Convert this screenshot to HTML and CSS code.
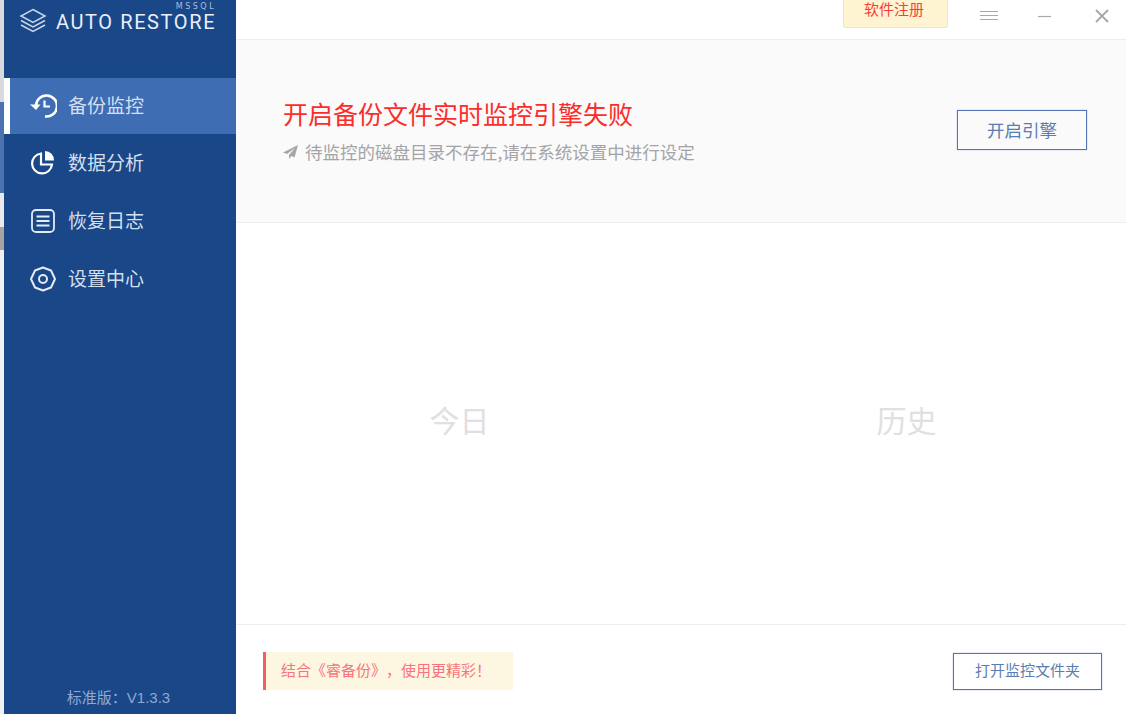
FILE: index.html
```html
<!DOCTYPE html>
<html lang="zh-CN">
<head>
    <meta charset="UTF-8">
    <title>Auto Restore</title>
    <link rel="stylesheet" href="styles.css">
</head>
<body>
    <div class="desktop-edge">
        <div class="edge-a"></div>
        <div class="edge-b"></div>
        <div class="edge-c"></div>
        <div class="edge-d"></div>
    </div>
    <aside class="sidebar">
        <div class="brand">
            <svg class="brand-icon" width="28" height="26" viewBox="0 0 28 26" fill="none" stroke="#c9d6ea" stroke-width="1.5">
                <path d="M14 1.5 L26 8 L14 14.5 L2 8 Z"/>
                <path d="M2 12.5 L14 19 L26 12.5"/>
                <path d="M2 17 L14 23.5 L26 17"/>
            </svg>
            <div class="brand-text">
                <span class="brand-sub">MSSQL</span>
                <span class="brand-name">AUTO RESTORE</span>
            </div>
        </div>
        <nav class="nav">
            <a class="nav-item active">
                <svg width="28" height="26" viewBox="0 0 28 26" fill="none" stroke="#fff" stroke-width="2.6">
                    <path d="M7 13 A10.5 10.5 0 1 1 16 23.4"/>
                    <path d="M1 11.5 L11.5 11.5 L7 17 Z" fill="#fff" stroke="none"/>
                    <path d="M15.5 7.5 V13.5 H21" stroke-width="2.2"/>
                </svg>
                <span>备份监控</span>
            </a>
            <a class="nav-item">
                <svg width="28" height="26" viewBox="0 0 28 26" fill="none" stroke="#fff" stroke-width="2.2">
                    <path d="M12 3.5 A10 10 0 1 0 23 14.5 H12 Z"/>
                    <path d="M16 1 A9 9 0 0 1 25 10.5 H16 Z" fill="#fff" stroke="none"/>
                </svg>
                <span>数据分析</span>
            </a>
            <a class="nav-item">
                <svg width="28" height="26" viewBox="0 0 28 26" fill="none" stroke="#e4ebf5" stroke-width="1.8">
                    <rect x="3" y="2" width="22" height="22" rx="4"/>
                    <path d="M7.5 8.5 H20.5 M7.5 13 H20.5 M7.5 17.5 H20.5"/>
                </svg>
                <span>恢复日志</span>
            </a>
            <a class="nav-item">
                <svg width="28" height="26" viewBox="0 0 28 26" fill="none" stroke="#e4ebf5" stroke-width="2">
                    <path d="M14 1.5 L22 4.5 L26 13 L22 21.5 L14 24.5 L6 21.5 L2 13 L6 4.5 Z" stroke-linejoin="round"/>
                    <circle cx="14" cy="13" r="4"/>
                </svg>
                <span>设置中心</span>
            </a>
        </nav>
        <div class="version">标准版：V1.3.3</div>
    </aside>
    <main class="content">
        <header class="topbar">
            <a class="register">软件注册</a>
            <div class="win-btn win-menu">
                <svg width="18" height="12" viewBox="0 0 18 12" stroke="#a9a9a9" stroke-width="1"><path d="M0 1.5 H18 M0 5.5 H18 M0 9.5 H18"/></svg>
            </div>
            <div class="win-btn win-min">
                <svg width="13" height="3" viewBox="0 0 13 3" stroke="#a9a9a9" stroke-width="1.2"><path d="M0 1.5 H13"/></svg>
            </div>
            <div class="win-btn">
                <svg width="14" height="14" viewBox="0 0 14 14" stroke="#a9a5ab" stroke-width="1.8"><path d="M1 1 L13 13 M13 1 L1 13"/></svg>
            </div>
        </header>
        <section class="status">
            <div class="status-text">
                <h1>开启备份文件实时监控引擎失败</h1>
                <p>
                    <svg width="15" height="14" viewBox="0 0 15 14" fill="#a6a6a6"><path d="M15 0 L0 7.5 L4 9 L12 3 L6 10 L6 14 L8.5 11 L11.5 12.5 Z"/></svg>
                    待监控的磁盘目录不存在,请在系统设置中进行设定
                </p>
            </div>
            <a class="btn btn-engine">开启引擎</a>
        </section>
        <section class="panels">
            <div class="panel">今日</div>
            <div class="panel">历史</div>
        </section>
        <footer class="footer">
            <div class="tip">结合《睿备份》，使用更精彩！</div>
            <a class="btn btn-folder">打开监控文件夹</a>
        </footer>
    </main>
</body>
</html>
```

FILE: styles.css
```css
* {
    box-sizing: border-box;
}

body {
    margin: 0;
    display: flex;
    height: 714px;
    overflow: hidden;
    background: #fff;
    font-family: "Noto Sans CJK SC", "Liberation Sans", sans-serif;
    text-spacing-trim: space-all;
}

/* sliver of the desktop showing behind the window */
.desktop-edge {
    width: 4px;
    flex-shrink: 0;
    display: flex;
    flex-direction: column;
    background: #f0f0f0;
}

.edge-a {
    height: 102px;
    background: #d9d9dd;
}

.edge-b {
    height: 91px;
    background: #4a72b0;
}

.edge-c {
    height: 34px;
    background: #e9e9ec;
}

.edge-d {
    height: 23px;
    background: #a9a4a2;
}

.sidebar {
    width: 232px;
    flex-shrink: 0;
    display: flex;
    flex-direction: column;
    background: #194788;
    color: #e4ebf5;
}

.brand {
    height: 78px;
    display: flex;
    align-items: flex-start;
    gap: 9px;
    padding: 8px 0 0 15px;
}

.brand-icon {
    flex-shrink: 0;
}

.brand-text {
    display: flex;
    flex-direction: column;
    align-items: flex-end;
    margin-top: -6px;
}

.brand-sub {
    font-family: "DejaVu Sans", sans-serif;
    font-size: 8px;
    line-height: 9px;
    letter-spacing: 2.5px;
    color: #a9bedd;
}

.brand-name {
    margin-top: 1px;
    font-family: "Roboto", sans-serif;
    font-size: 20px;
    line-height: 20px;
    letter-spacing: 1.6px;
    color: #e9eff8;
}

.nav {
    display: flex;
    flex-direction: column;
}

.nav-item {
    height: 58px;
    display: flex;
    align-items: center;
    gap: 11px;
    padding-left: 25px;
    font-size: 19px;
    color: #d5dfee;
}

.nav-item span {
    margin-top: -4px;
}

.nav-item.active {
    height: 56px;
    background: #3f6db3;
    border-left: 6px solid #fff;
    padding-left: 19px;
}

.version {
    margin-top: auto;
    padding: 0 3px 6px 0;
    text-align: center;
    font-family: "Liberation Sans", "Noto Sans CJK SC", sans-serif;
    font-size: 15px;
    line-height: 20px;
    color: #8fa9d2;
}

.content {
    flex: 1;
    display: flex;
    flex-direction: column;
    min-width: 0;
}

.topbar {
    height: 40px;
    flex-shrink: 0;
    display: flex;
    align-items: flex-start;
    justify-content: flex-end;
    padding-right: 14px;
    border-bottom: 1px solid #eeeeee;
}

.register {
    width: 105px;
    height: 28px;
    margin-right: 31px;
    padding-right: 3px;
    background: #fff4d1;
    border: 1px solid #e8e4d8;
    border-top: 0;
    border-radius: 0 0 3px 3px;
    color: #f5403a;
    font-size: 15px;
    line-height: 18px;
    text-align: center;
}

.win-btn {
    width: 20px;
    height: 32px;
    display: flex;
    align-items: center;
    justify-content: center;
}

.win-menu {
    margin-right: 35px;
}

.win-min {
    margin-right: 38px;
}

.status {
    height: 183px;
    flex-shrink: 0;
    display: flex;
    align-items: center;
    justify-content: space-between;
    padding: 0 39px 3px 47px;
    background: #fafafa;
    border-bottom: 1px solid #eeeeee;
}

.status h1 {
    margin: 0 0 11px;
    font-size: 25px;
    line-height: 34px;
    font-weight: 400;
    color: #fb2d2a;
}

.status p {
    margin: 0;
    display: flex;
    align-items: center;
    gap: 7px;
    font-size: 17.5px;
    line-height: 22px;
    color: #a4a4a8;
}

.btn {
    display: flex;
    align-items: center;
    justify-content: center;
    border: 1px solid #5077b0;
    box-shadow: 0 0 1px #7ea0d0;
    color: #5b7cb0;
}

.btn-engine {
    width: 130px;
    height: 40px;
    font-size: 17.5px;
}

.btn-folder {
    width: 149px;
    height: 37px;
    padding-bottom: 3px;
    font-size: 15px;
}

.panels {
    flex: 1;
    display: grid;
    grid-template-columns: 447px 447px;
    overflow: hidden;
}

.panel {
    display: flex;
    align-items: center;
    justify-content: center;
    padding-bottom: 10px;
    font-size: 30px;
    color: #e0e0e0;
}

.footer {
    height: 90px;
    flex-shrink: 0;
    display: flex;
    align-items: center;
    justify-content: space-between;
    padding: 3px 24px 0 27px;
    border-top: 1px solid #eeeeee;
}

.tip {
    width: 250px;
    height: 38px;
    padding-left: 15px;
    background: #fdf6e0;
    border-left: 3px solid #f55d66;
    color: #f8737f;
    font-size: 15px;
    line-height: 36px;
}
```
